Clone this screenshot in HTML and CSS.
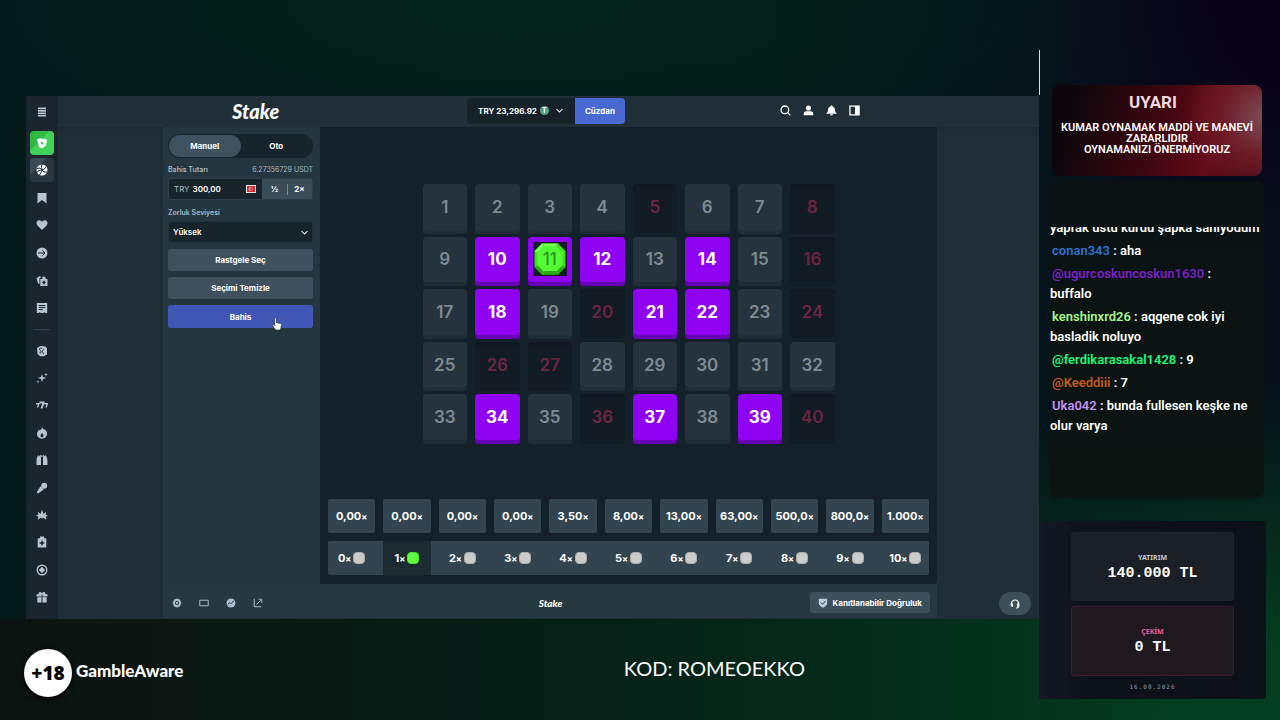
FILE: index.html
```html
<!DOCTYPE html>
<html lang="tr">
<head>
  <meta charset="UTF-8">
  <meta name="viewport" content="width=device-width, initial-scale=1.0">
  <title>Keno - Stake</title>
  <link rel="stylesheet" href="styles.css">
</head>
<body>
  <div class="stage">
    <div class="stage-top"></div>

    <div class="app">
      <nav class="sidebar">
        <button class="side-btn menu" aria-label="Menü"><svg viewBox="0 0 12 12"><path d="M2 1.500h8v1.700H2zM2 4h8v1.700H2zM2 6.500h8v1.700H2zM2 9h8v1.500H2z"/></svg></button>
        <div class="side-group first">
          <a href="#" class="side-btn casino" aria-label="Casino"><svg viewBox="0 0 12 12"><path d="M.8 2.300l2.400-.9 3 .1 5 1.300-1.500 6-3.500 2.500-2.900-1z"/><path class="cut" d="M6 4.500L7.600 6.300 6 8 4.700 6z"/></svg></a>
          <a href="#" class="side-btn sports" aria-label="Spor"><svg viewBox="0 0 12 12"><circle cx="6" cy="6" r="5.500"/><path class="line" d="M1 4.500c3-1 4 0 5 1.500s2.500 2.500 5 2M6 .5c-1 2 0 4 0 5.500S4 10 3.500 11M6 6c2 0 3-1.500 4-3.500M6 6c-2 0-4 1-5 2"/></svg></a>
          <a href="#" class="side-btn" aria-label="Kayıtlı"><svg viewBox="0 0 12 12"><path d="M1.500 1h9v10.500L6 8l-4.500 3.500z"/></svg></a>
          <a href="#" class="side-btn" aria-label="Favoriler"><svg viewBox="0 0 12 12"><path d="M6 11L1.200 6.200C-.5 3.500 1.200 1.200 3.200 1.200 4.600 1.200 5.500 2 6 3c.5-1 1.400-1.800 2.800-1.800 2 0 3.700 2.300 2 5z"/></svg></a>
          <a href="#" class="side-btn" aria-label="Devam et"><svg viewBox="0 0 12 12"><circle cx="6" cy="6" r="5.500"/><path class="line" d="M2 6h7M6.500 3.500L9 6 6.500 8.500"/></svg></a>
          <a href="#" class="side-btn" aria-label="Yarışma"><svg viewBox="0 0 12 12"><path d="M.5 3L4 1l1 2H3.500v6L2 8.500zM4.300 4h2V1.500l3 .5.5 2h1.700v7H4.300z"/><path class="cut" d="M8 5.300l1.700 2.200L8 9.700 6.200 7.500z"/></svg></a>
          <a href="#" class="side-btn" aria-label="Bahislerim"><svg viewBox="0 0 12 12"><path d="M.8 1h10.400v10H9.500l-1-.8-1.200.8H4.800l-1.200-.8-1 .8H.8z"/><path class="line" d="M2.800 3.500h6.400M2.800 5.500h6.400M2.800 7.500h4"/></svg></a>
        </div>
        <hr>
        <div class="side-group">
          <a href="#" class="side-btn" aria-label="Stake Originals"><svg viewBox="0 0 12 12"><path d="M1 3l3.500-2 5 .5 1.500 2v6l-3 1.800H4L1.500 9z"/><path class="line" d="M6 3.500c-2-1-3.500.5-2 1.800s2 2.500-.5 2.700M8 4c-2 1-2 4 0 5"/></svg></a>
          <a href="#" class="side-btn" aria-label="Yeni"><svg viewBox="0 0 12 12"><path d="M6 2l1 3 3.200 1-3.200 1-1 3.200L5 7 1.800 6 5 5zM10 .8l.5 1.300 1.300.5-1.300.5L10 4.400l-.5-1.300-1.300-.5 1.300-.5zM2 8.300l.4 1.100 1.200.4-1.200.4L2 11.300l-.4-1.100-1.200-.4 1.200-.4z"/></svg></a>
          <a href="#" class="side-btn" aria-label="Slotlar"><svg viewBox="0 0 12 12"><path d="M3.500 2.500h5V4L6.500 9.500h-2L6.300 4.500H3.500zM0 4h3.600v1L2.200 8.500H.8L2 5.400H0zM8.500 4H12v1l-1.300 3.500H9.300l1.200-3.100H8.200z"/></svg></a>
          <a href="#" class="side-btn" aria-label="Popüler"><svg viewBox="0 0 12 12"><path d="M6.300 0c.3 2 1.500 2.500 2.500 2.500 2 1.500 2.400 3 2.200 4.800C10.700 10 8.500 11.700 6 11.700S1.200 10 1 7.500C.8 5.500 2 4.200 3 2.500l1 1C5 2.800 6 1.500 6.300 0z"/><path class="cut" d="M6 6c1 1.200 1.500 1.800 1.500 2.700a1.500 1.500 0 0 1-3 0C4.500 7.800 5 7.200 6 6z"/></svg></a>
          <a href="#" class="side-btn" aria-label="Canlı casino"><svg viewBox="0 0 12 12"><path d="M2.500 1.200L5 3v8H.5C.5 7 .3 3 2.500 1.200zM9.500 1.200L7 3v8h4.500c0-4 .2-8-2-9.800zM4 1l2 .8L8 1v2L6 2.500 4 3z"/></svg></a>
          <a href="#" class="side-btn" aria-label="Yayınlar"><svg viewBox="0 0 12 12"><circle cx="8.200" cy="3.800" r="3"/><path d="M4.500 4.200l3.300 3.300L2 11.500.7 10.200z"/></svg></a>
          <a href="#" class="side-btn" aria-label="Masa oyunları"><svg viewBox="0 0 12 12"><path d="M6 .8L7.500 5l2.700-2.200-.5 3 2.300.5-2.300 1.500.5 3L7 8.500 6 10 5 8.500l-3.200 2.300.5-3L0 6.300l2.300-.5-.5-3L4.500 5z"/></svg></a>
          <a href="#" class="side-btn" aria-label="Bonus"><svg viewBox="0 0 12 12"><path d="M4 .5h4v1.700h2.300v9.300H1.700V2.200H4z"/><path class="cut" d="M6 4l1 1.900L9 7 7 8 6 10 5 8 3 7l2-1.100z"/></svg></a>
          <a href="#" class="side-btn" aria-label="Rulet"><svg viewBox="0 0 12 12"><circle cx="6" cy="6" r="4.800" class="ring"/><path d="M6 2.800L9.200 6 6 9.200 2.800 6z"/></svg></a>
          <a href="#" class="side-btn" aria-label="Promosyonlar"><svg viewBox="0 0 12 12"><path d="M.5 3.300h2.300C2 1 4.500.3 6 2.200 7.500.3 10 1 9.200 3.300h2.300v2.200h-5V3.600h-1v1.900h-5zM1.300 6.300h4.200v5.200H1.300zM6.500 6.300h4.200v5.200H6.500z"/></svg></a>
        </div>
      </nav>

      <div class="main">
        <header class="topbar">
          <a href="#" class="logo">Stake</a>
          <div class="wallet">
            <button class="balance">TRY 23,296.92 <span class="coin">T</span>
              <svg viewBox="0 0 12 12"><path class="stroke" d="M2 4l4 4 4-4"/></svg>
            </button>
            <button class="wallet-btn">Cüzdan</button>
          </div>
          <div class="top-icons">
            <button aria-label="Ara"><svg viewBox="0 0 12 12"><circle class="stroke" cx="5.300" cy="5.300" r="4.200"/><path class="stroke" d="M8.500 8.500L11.300 11.300"/></svg></button>
            <button aria-label="Profil"><svg viewBox="0 0 12 12"><circle cx="6" cy="3.300" r="2.800"/><path d="M.8 11.300V9.500c0-1.700 1.200-2.700 2.700-2.700h5c1.500 0 2.700 1 2.700 2.700v1.800z"/></svg></button>
            <button aria-label="Bildirimler"><svg viewBox="0 0 12 12"><path d="M5 .5h2v1c2 .5 2.800 2 2.800 4 0 1.500.5 2.500 1.700 3.200v.8H.5v-.8C1.700 8 2.200 7 2.200 5.500c0-2 .8-3.500 2.800-4zM4.300 10h3.400c-.3 2-3.100 2-3.400 0z"/></svg></button>
            <button aria-label="Panel"><svg viewBox="0 0 12 12"><path class="stroke" d="M1 1.200h10v9.600H1z"/><path d="M6.500 1H11v10H6.500z"/></svg></button>
          </div>
        </header>

        <div class="game">
          <form class="controls">
            <div class="tabs">
              <button type="button" class="active">Manuel</button>
              <button type="button">Oto</button>
            </div>
            <div class="label-row">
              <label for="amount">Bahis Tutarı</label>
              <span>6.27356729 USDT</span>
            </div>
            <div class="amount-row">
              <span class="currency">TRY</span>
              <input type="text" id="amount" value="300,00">
              <svg class="flag" viewBox="0 0 10 8"><path fill="#e8e3e4" d="M0 0h10v8H0z"/><path fill="#d3242f" d="M1 1h8v6H1z"/><circle cx="4.500" cy="4" r="1.800" fill="#fff"/><circle cx="5.100" cy="4" r="1.300" fill="#d3242f"/><circle cx="6.500" cy="4" r=".6" fill="#fff"/></svg>
              <button type="button">½</button>
              <button type="button" class="double">2×</button>
            </div>
            <div class="label-row">
              <label for="risk">Zorluk Seviyesi</label>
            </div>
            <div class="select-wrap">
              <select id="risk"><option>Yüksek</option></select>
              <svg viewBox="0 0 12 12"><path class="stroke" d="M2 4l4 4 4-4"/></svg>
            </div>
            <button type="button" class="btn">Rastgele Seç</button>
            <button type="button" class="btn">Seçimi Temizle</button>
            <button type="button" class="btn bet">Bahis
              <svg class="cursor" viewBox="0 0 10 14"><path fill="#fff" stroke="#222b33" stroke-width=".7" d="M2.700 1.200c.8-.8 1.700-.2 1.700.8v3.500l4 .9c1.100.4 1.200 1 1 2L8.500 13H3.700L.6 8.700c-.3-.9.700-1.400 1.400-.8l.7.7z"/></svg>
            </button>
          </form>

          <div class="board">
            <div class="tiles">
              <button class="tile">1</button>
              <button class="tile">2</button>
              <button class="tile">3</button>
              <button class="tile">4</button>
              <button class="tile miss">5</button>
              <button class="tile">6</button>
              <button class="tile">7</button>
              <button class="tile miss">8</button>
              <button class="tile">9</button>
              <button class="tile picked">10</button>
              <button class="tile picked hit"><span class="gem"><svg viewBox="0 0 34 34"><path fill="#3fe021" d="M9 1.500h16L32.500 9v16L25 32.500H9L1.500 25V9z"/><path fill="#76ff55" d="M9 1.500h16l-3 3H12zM1.500 9L9 1.500l2 4L5.500 11z"/><path fill="#28a915" d="M9 32.500l3-4h10l3 4zM32.500 25L25 32.500 23.500 29l5.500-5.500zM1.500 25L9 32.500l1.500-3.500L5 23.500z"/><path fill="#55f936" d="M10.500 4.500h13l6 6v13l-6 5.500h-13l-6-5.500v-13z"/></svg><b>11</b></span></button>
              <button class="tile picked">12</button>
              <button class="tile">13</button>
              <button class="tile picked">14</button>
              <button class="tile">15</button>
              <button class="tile miss">16</button>
              <button class="tile">17</button>
              <button class="tile picked">18</button>
              <button class="tile">19</button>
              <button class="tile miss">20</button>
              <button class="tile picked">21</button>
              <button class="tile picked">22</button>
              <button class="tile">23</button>
              <button class="tile miss">24</button>
              <button class="tile">25</button>
              <button class="tile miss">26</button>
              <button class="tile miss">27</button>
              <button class="tile">28</button>
              <button class="tile">29</button>
              <button class="tile">30</button>
              <button class="tile">31</button>
              <button class="tile">32</button>
              <button class="tile">33</button>
              <button class="tile picked">34</button>
              <button class="tile">35</button>
              <button class="tile miss">36</button>
              <button class="tile picked">37</button>
              <button class="tile">38</button>
              <button class="tile picked">39</button>
              <button class="tile miss">40</button>
            </div>
            <div class="payouts">
              <div>0,00<i>×</i></div>
              <div>0,00<i>×</i></div>
              <div>0,00<i>×</i></div>
              <div>0,00<i>×</i></div>
              <div>3,50<i>×</i></div>
              <div>8,00<i>×</i></div>
              <div>13,00<i>×</i></div>
              <div>63,00<i>×</i></div>
              <div>500,0<i>×</i></div>
              <div>800,0<i>×</i></div>
              <div>1.000<i>×</i></div>
            </div>
            <div class="hits">
              <div>0<i>×</i><span class="stone"></span></div>
              <div class="active">1<i>×</i><span class="stone"></span></div>
              <div>2<i>×</i><span class="stone"></span></div>
              <div>3<i>×</i><span class="stone"></span></div>
              <div>4<i>×</i><span class="stone"></span></div>
              <div>5<i>×</i><span class="stone"></span></div>
              <div>6<i>×</i><span class="stone"></span></div>
              <div>7<i>×</i><span class="stone"></span></div>
              <div>8<i>×</i><span class="stone"></span></div>
              <div>9<i>×</i><span class="stone"></span></div>
              <div>10<i>×</i><span class="stone"></span></div>
            </div>
          </div>

          <div class="game-footer">
            <div class="tools">
              <button aria-label="Ayarlar"><svg viewBox="0 0 12 12"><path d="M4.500 1.200L6 .5l1.500.7 2.300.9.500 2 1 1.900-1 1.900-.5 2-2.300.9L6 11.500l-1.500-.7-2.300-.9-.5-2-1-1.900 1-1.900.5-2z"/><circle class="line" cx="6" cy="6" r="2"/></svg></button>
              <button aria-label="Tiyatro modu"><svg viewBox="0 0 12 12"><path class="stroke" d="M.9 2.700h10.200v6.600H.9z"/></svg></button>
              <button aria-label="İstatistik"><svg viewBox="0 0 12 12"><circle cx="6" cy="6" r="5.400"/><path class="line" d="M2 8l2.500-2.500L6 7l3.500-3.800"/></svg></button>
              <button aria-label="Paylaş"><svg viewBox="0 0 12 12"><path class="stroke" d="M1.500 1v9.500H10M4 8l6-6M6.500 1.500H10.500v4"/></svg></button>
            </div>
            <a href="#" class="logo small">Stake</a>
            <button class="fair"><svg viewBox="0 0 12 12"><path d="M1 1h10v6c0 2.500-3 3.500-5 4.700C4 10.500 1 9.500 1 7z"/><path class="line" d="M3.500 5.500l2 2 3.500-4"/></svg>Kanıtlanabilir Doğruluk</button>
          </div>
        </div>
        <button class="support" aria-label="Canlı destek"><svg viewBox="0 0 12 12"><path class="stroke" d="M1.700 7V5.500a4.300 4.300 0 0 1 8.600 0V9c0 1-.8 1.800-3 1.800"/><path d="M.8 5.500h2.700v3.800C2 9.500.8 8.500.8 7.500zM8.500 5.500h2.700v2c0 1-1.200 2-2.700 1.800z"/></svg></button>
      </div>
    </div>

    <div class="stage-bottom">
      <div class="age">+18</div>
      <div class="aware">GambleAware</div>
      <div class="code">KOD: ROMEOEKKO</div>
    </div>
  </div>

  <aside class="overlay">
    <div class="warning">
      <h2>UYARI</h2>
      <p>KUMAR OYNAMAK MADDİ VE MANEVİ ZARARLIDIR<br>OYNAMANIZI ÖNERMİYORUZ</p>
    </div>
    <div class="chat">
      <div class="messages">
        <p>yaprak üstü kürdü şapka sanıyodum</p>
        <p><b class="c-blue">conan343</b> : aha</p>
        <p><b class="c-purple">@ugurcoskuncoskun1630</b> : buffalo</p>
        <p><b class="c-lime">kenshinxrd26</b> : aqgene cok iyi basladik noluyo</p>
        <p><b class="c-green">@ferdikarasakal1428</b> : 9</p>
        <p><b class="c-orange">@Keeddiii</b> : 7</p>
        <p><b class="c-lilac">Uka042</b> : bunda fullesen keşke ne olur varya</p>
      </div>
    </div>
    <div class="stats">
      <div class="stat"><span>YATIRIM</span><strong>140.000 TL</strong></div>
      <div class="stat out"><span>ÇEKİM</span><strong>0 TL</strong></div>
      <time>16.08.2026</time>
    </div>
  </aside>
</body>
</html>
```
FILE: styles.css
```css
* {
  box-sizing: border-box;
}
body {
  margin: 0;
  min-height: 100vh;
  display: flex;
  overflow-x: hidden;
  font-family: Inter, "Open Sans", sans-serif;
  color: #fff;
  background:
    radial-gradient(ellipse 240px 300px at 100% 0, #090219 20%, transparent),
    radial-gradient(ellipse 560px 340px at 100% 100%, #033f1e 20%, transparent),
    radial-gradient(ellipse 620px 200px at 40% 0, #03231a, transparent),
    linear-gradient(90deg, #03191a 0, #041c18 60%, #06101b 90%);
  background-color: #071916;
}
button, input, select {
  font-family: inherit;
  color: inherit;
  border: none;
  margin: 0;
  padding: 0;
  background: none;
}
button {
  cursor: pointer;
}
a {
  color: inherit;
  text-decoration: none;
}
svg {
  width: 12px;
  height: 12px;
  flex: none;
  fill: currentColor;
}
.stroke, .ring {
  fill: none;
  stroke: currentColor;
  stroke-width: 1.4;
}
.cut {
  fill: #1a2830;
}
.line {
  fill: none;
  stroke: #1a2830;
  stroke-width: 1;
}

/* stream stage */
.stage {
  flex: 1;
  min-width: 0;
  display: flex;
  flex-direction: column;
}
.stage-top {
  height: 45px;
  margin: 50px 0 1px;
  border-right: 1px solid #d7dcdc;
}
.app {
  display: flex;
  margin: 0 1px 0 26px;
  background: #1f2e36;
}
.stage-bottom {
  flex: 1;
  display: grid;
  grid-template-columns: 48px 1fr auto;
  align-items: center;
  gap: 4px;
  padding: 0 235px 0 24px;
  background: linear-gradient(90deg, #0c1411, #071c16 45%, #042b1b 85%, #04351d);
}
.age {
  width: 48px;
  height: 48px;
  margin-top: 6px;
  border-radius: 50%;
  background: #fff;
  color: #000;
  font: 800 19px/48px "Open Sans", sans-serif;
  text-align: center;
  box-shadow: 0 2px 6px #000;
}
.aware {
  font: 900 17px "Lato", sans-serif;
}
.code {
  margin-bottom: 4px;
  font: 400 20px "Lato", sans-serif;
}

/* icon rail */
.sidebar {
  width: 32px;
  flex: none;
  display: flex;
  flex-direction: column;
  align-items: center;
  background: #1a252e;
  color: #b5c4cf;
  padding-bottom: 8px;
}
.side-btn {
  width: 24px;
  height: 24px;
  display: grid;
  place-items: center;
  border-radius: 4px;
}
.side-btn.menu {
  height: 32px;
}
.side-group {
  height: 274px;
  display: grid;
  align-items: center;
}
.side-group.first {
  height: 193px;
  margin-top: 1px;
}
.sidebar hr {
  width: 16px;
  margin: 7px 0;
  border: none;
  border-top: 1px solid #2f3e48;
}
.casino {
  color: #fff;
  background: linear-gradient(135deg, #31b943 40%, #43d257 41%);
}
.casino .cut {
  fill: #38c34a;
}
.sports {
  color: #fff;
  background: linear-gradient(135deg, #3b4955 35%, #2a3741 36%);
}

/* header */
.main {
  flex: 1;
  min-width: 0;
  position: relative;
  padding-bottom: 1px;
}
.topbar {
  height: 31px;
  display: grid;
  grid-template-columns: 1fr auto 1fr;
  align-items: center;
  padding: 0 179px 2px 174px;
  background: #202f37;
  box-shadow: 0 1px 3px #17222a;
}
.logo {
  font: italic 900 20px/28px "Lato", sans-serif;
}
.logo.small {
  font-size: 10px;
}
.wallet {
  display: flex;
}
.balance {
  height: 26px;
  display: flex;
  align-items: center;
  gap: 3px;
  padding: 0 11px;
  border-radius: 4px 0 0 4px;
  background: #162227;
  font-size: 8px;
  font-weight: 700;
}
.balance svg {
  width: 9px;
  height: 9px;
  margin-left: 3px;
}
.coin {
  width: 9px;
  height: 9px;
  border-radius: 50%;
  background: #4ba486;
  font-size: 7px;
  line-height: 9px;
}
.wallet-btn {
  width: 50px;
  border-radius: 0 4px 4px 0;
  background: #4969d2;
  font-size: 8px;
  font-weight: 700;
}
.top-icons {
  display: flex;
  justify-content: flex-end;
  gap: 12px;
}
.top-icons button {
  display: flex;
}
.top-icons svg {
  width: 11px;
  height: 11px;
}

/* game frame */
.game {
  display: grid;
  grid-template-columns: 157px 1fr;
  margin: 0 102px 0 105px;
}
.controls {
  padding: 7px 7px 0 5px;
  background: #24363f;
  display: flex;
  flex-direction: column;
}
.tabs {
  display: flex;
  padding: 1px;
  height: 24px;
  border-radius: 12px;
  background: #18242b;
}
.tabs button {
  flex: 1;
  border-radius: 11px;
  font-size: 8px;
  font-weight: 700;
}
.tabs .active {
  background: #405160;
}
.label-row {
  display: flex;
  justify-content: space-between;
  margin-top: 6px;
  font-size: 7px;
  line-height: 12px;
  color: #a9bac5;
}
.label-row label {
  font-weight: 600;
}
.amount-row {
  display: flex;
  align-items: center;
  height: 22px;
  margin: 2px 0 1px;
  padding-left: 5px;
  border-radius: 3px;
  border: 1px solid #2c3f4a;
  background: #18242b;
  font-size: 8px;
}
.currency {
  margin-right: 3px;
  color: #a9bac5;
}
.amount-row input {
  flex: 1;
  min-width: 0;
  font-size: 8px;
  font-weight: 600;
}
.amount-row .flag {
  width: 10px;
  height: 8px;
  margin-right: 6px;
}
.amount-row button {
  width: 25px;
  height: 20px;
  background: #3a4c58;
  font-size: 8px;
  font-weight: 700;
}
.amount-row .double {
  background: linear-gradient(#7b8993, #7b8993) 0 50% / 1px 11px no-repeat #3a4c58;
}
.select-wrap {
  display: grid;
  align-items: center;
  height: 22px;
  margin: 2px 0 6px;
}
.select-wrap select {
  grid-area: 1 / 1;
  height: 22px;
  padding-left: 4px;
  appearance: none;
  border: 1px solid #22323b;
  border-radius: 3px;
  background: #18242b;
  font-size: 8px;
  font-weight: 600;
}
.select-wrap svg {
  grid-area: 1 / 1;
  justify-self: end;
  width: 9px;
  height: 9px;
  margin-right: 4px;
  pointer-events: none;
}
.btn {
  height: 22px;
  margin-bottom: 6px;
  border-radius: 3px;
  background: #3e505d;
  font-size: 8px;
  font-weight: 700;
}
.btn.bet {
  height: 23px;
  position: relative;
  background: #4157b5;
}
.cursor {
  position: absolute;
  left: 104px;
  top: 12px;
  width: 10px;
  height: 14px;
}

/* board */
.board {
  background: #14212a;
  padding: 57px 8px 9px;
  border-radius: 0 0 4px 0;
}
.tiles {
  display: grid;
  grid-template-columns: repeat(8, 1fr);
  grid-auto-rows: 1fr;
  gap: 3px 8px;
  min-height: 260px;
  width: 412px;
  max-width: 100%;
  margin: 0 auto 55px;
}
.tile {
  border-radius: 4px;
  background: #25333e;
  box-shadow: inset 0 -4px #1f2d36;
  color: #7f8b93;
  font-size: 17px;
  font-weight: 600;
  padding-bottom: 4px;
}
.tile.picked {
  background: #8f02f4;
  box-shadow: inset 0 -4px #6800b4;
  color: #fff;
  font-weight: 700;
}
.tile.miss {
  background: #111b23;
  box-shadow: inset 0 3px #0f1820;
  color: #6d2440;
}
.gem {
  display: grid;
  place-items: center;
  width: 34px;
  height: 34px;
  margin: 0 auto;
  background: #111d22;
}
.gem svg, .gem b {
  grid-area: 1 / 1;
}
.gem svg {
  width: 34px;
  height: 34px;
}
.gem b {
  color: #259722;
  font-weight: 500;
}
.payouts, .hits {
  display: grid;
  grid-template-columns: repeat(11, 1fr);
  gap: 8px;
  height: 34px;
  font-size: 11px;
  font-weight: 700;
}
.payouts div, .hits div {
  display: flex;
  align-items: center;
  justify-content: center;
  min-width: 0;
}
.payouts div {
  border-radius: 2px;
  background: #32444f;
}
.payouts i, .hits i {
  font-style: normal;
  font-size: 9px;
}
.hits {
  margin-top: 8px;
  border-radius: 2px;
  background: #32444f;
}
.hits .active {
  background: #1c2a31;
}
.stone {
  width: 12px;
  height: 12px;
  margin-left: 2px;
  border-radius: 4px;
  border: 1px solid #aaadad;
  background: #cbcbc9;
}
.active .stone {
  border-color: #4be331;
  background: #60fb43;
}

/* game footer */
.game-footer {
  grid-column: 1 / -1;
  height: 34px;
  display: grid;
  grid-template-columns: 1fr auto 1fr;
  align-items: center;
  padding: 3px 7px 0 8px;
  background: #263840;
}
.tools {
  display: flex;
  gap: 15px;
  color: #a9bcc9;
}
.tools button {
  display: flex;
}
.tools svg {
  width: 12px;
  height: 10px;
}
.tools .stroke {
  stroke-width: 1.2;
}
.fair {
  justify-self: end;
  height: 21px;
  display: flex;
  align-items: center;
  gap: 5px;
  padding: 0 8px;
  border-radius: 3px;
  background: #3e4f5c;
  font-size: 8px;
  font-weight: 700;
}
.fair svg {
  width: 10px;
  height: 10px;
  color: #bccbd8;
}
.support {
  position: absolute;
  right: 8px;
  bottom: 4px;
  width: 32px;
  height: 23px;
  display: grid;
  place-items: center;
  border-radius: 12px;
  background: #3e4f5c;
}
.support svg {
  width: 10px;
  height: 10px;
}

/* right overlay */
.overlay {
  width: 240px;
  flex: none;
  padding: 85px 14px 22px 0;
  font-family: Roboto, sans-serif;
}
.warning {
  height: 91px;
  margin: 0 4px 5px 12px;
  padding: 7px 4px;
  border-radius: 8px;
  text-align: center;
  background:
    radial-gradient(circle at 100% 35%, #7c4a55 0, #6d1c28 18%, transparent 36%),
    linear-gradient(105deg, #0c060c 10%, #41060f 52%, #640b18 75%, #3b0510);
}
.warning h2 {
  margin: 0 0 10px;
  padding-right: 8px;
  font-size: 17px;
  line-height: 20px;
  color: #eed9dd;
}
.warning p {
  margin: 0;
  font-size: 11px;
  line-height: 11px;
  font-weight: 600;
}
.chat {
  height: 318px;
  margin: 0 2px 22px 9px;
  padding: 46px 0 0 1px;
  border-radius: 8px;
  background: linear-gradient(#0b1113, #0b1512);
}
.messages {
  overflow: hidden;
  font-size: 13px;
  font-weight: 600;
  line-height: 20px;
}
.messages p {
  margin: 0 0 3px;
  padding-right: 11px;
}
.messages p:first-child {
  margin-top: -9px;
  white-space: nowrap;
}
.messages b {
  margin-left: 2px;
  font-weight: 600;
}
.c-blue { color: #2a74cd; }
.c-purple { color: #7a20c8; }
.c-lime { color: #a9f688; }
.c-green { color: #20f77a; }
.c-orange { color: #c35c1c; }
.c-lilac { color: #c591f3; }
.stats {
  margin-left: -1px;
  padding: 11px 32px 6px;
  border-radius: 2px;
  background: linear-gradient(90deg, #131925, #0e1219 20%, #0d1117 85%, #0c121a);
  text-align: center;
}
.stat {
  height: 69px;
  margin-bottom: 5px;
  padding-top: 19px;
  border: 1px solid #1d252b;
  border-radius: 3px;
  background: #1a2026;
}
.stat.out {
  height: 70px;
  border-color: #3d1c2c;
  background: #1f191f;
}
.stat span {
  display: block;
  font: 700 7px/12px "Noto Sans", sans-serif;
  color: #c3c9cf;
}
.stat.out span {
  color: #ee5a99;
}
.stat strong {
  display: block;
  font: 700 15px/20px "Liberation Mono", monospace;
}
.stats time {
  display: block;
  font: 400 6px/12px "DejaVu Sans Mono", monospace;
  letter-spacing: 1px;
  color: #929ba5;
}
```
